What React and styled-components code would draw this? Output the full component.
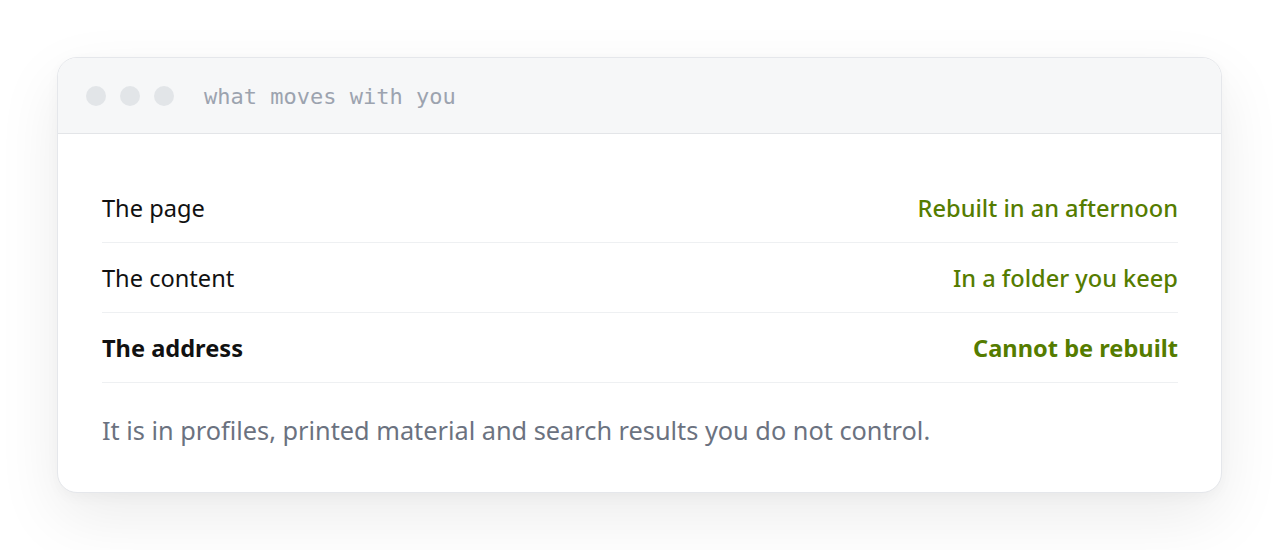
import styled, { createGlobalStyle } from 'styled-components';

const GlobalStyle = createGlobalStyle`
  html, body {
    margin: 0;
    background: #ffffff;
  }
  * { box-sizing: border-box; }
`;

const Page = styled.div`
  width: 1280px;
  height: 550px;
  padding: 57px 58px 0 57px;
  font-family: "Noto Sans", "Open Sans", sans-serif;
`;

const Card = styled.div`
  background: #ffffff;
  border: 1px solid #e5e7eb;
  border-radius: 20px;
  overflow: hidden;
  box-shadow: 0 24px 64px rgba(0, 0, 0, 0.08), 0 4px 14px rgba(0, 0, 0, 0.03);
`;

const TitleBar = styled.div`
  height: 76px;
  display: flex;
  align-items: center;
  gap: 14px;
  padding: 0 28px;
  background: #f6f7f8;
  border-bottom: 1px solid #e3e5e8;
`;

const Dot = styled.span`
  width: 20px;
  height: 20px;
  border-radius: 50%;
  background: #e2e5e8;
`;

const Title = styled.span`
  margin-left: 16px;
  padding-top: 2px;
  font-family: "DejaVu Sans Mono", "Liberation Mono", monospace;
  font-size: 22px;
  color: #9ca3af;
`;

const Body = styled.div`
  padding: 39px 43px 45px 44px;
`;

const Row = styled.div`
  height: 70px;
  display: flex;
  align-items: center;
  justify-content: space-between;
  border-bottom: 1px solid #eef0f2;
  font-size: 23.6px;
  font-weight: ${p => (p.$bold ? 700 : 400)};
`;

const Label = styled.span`
  color: #111111;
`;

const Value = styled.span`
  color: #557c00;
  font-weight: ${p => (p.$bold ? 700 : 500)};
`;

const Note = styled.p`
  margin: 31px 0 0 0;
  font-size: 25.3px;
  line-height: 1.3;
  color: #6b7280;
`;

const rows = [
  { label: 'The page', value: 'Rebuilt in an afternoon' },
  { label: 'The content', value: 'In a folder you keep' },
  { label: 'The address', value: 'Cannot be rebuilt', bold: true },
];

export default function App() {
  return (
    <Page>
      <GlobalStyle />
      <Card>
        <TitleBar>
          <Dot />
          <Dot />
          <Dot />
          <Title>what moves with you</Title>
        </TitleBar>
        <Body>
          {rows.map(r => (
            <Row key={r.label} $bold={r.bold}>
              <Label>{r.label}</Label>
              <Value $bold={r.bold}>{r.value}</Value>
            </Row>
          ))}
          <Note>It is in profiles, printed material and search results you do not control.</Note>
        </Body>
      </Card>
    </Page>
  );
}
